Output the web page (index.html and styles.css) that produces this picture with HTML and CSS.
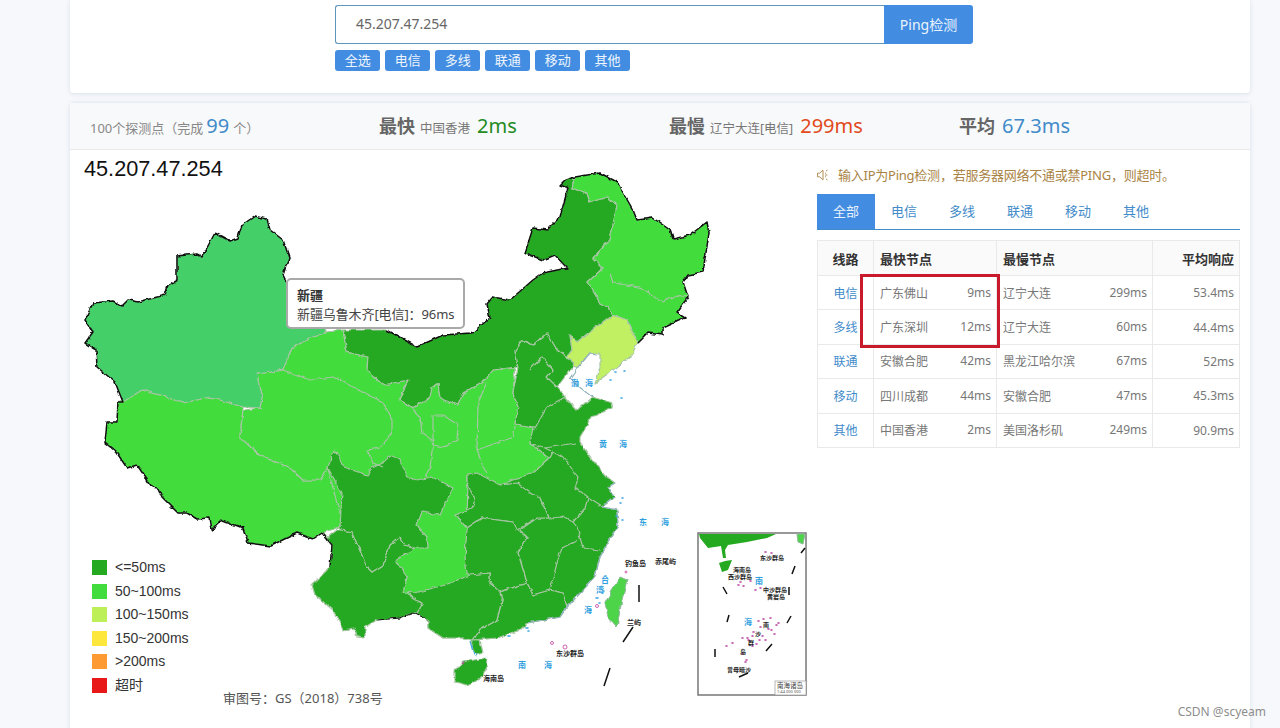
FILE: index.html
```html
<!DOCTYPE html>
<html lang="zh-CN">
<head>
<meta charset="utf-8">
<title>Ping检测</title>
<link rel="stylesheet" href="styles.css">
</head>
<body>
<section class="search-card">
  <div class="search-inner">
    <div class="search-row">
      <div class="search-input">45.207.47.254</div>
      <div class="search-btn">Ping检测</div>
    </div>
    <div class="quick-row">
      <span class="quick">全选</span><span class="quick">电信</span><span class="quick">多线</span><span class="quick">联通</span><span class="quick">移动</span><span class="quick">其他</span>
    </div>
  </div>
</section>

<section class="result-card">
  <header class="summary">
    <div class="sum-item sum-count">100个探测点（完成<b class="num-blue">99</b>个）</div>
    <div class="sum-item"><b class="sum-label">最快</b><span class="sum-place">中国香港</span><span class="sum-val green">2ms</span></div>
    <div class="sum-item"><b class="sum-label">最慢</b><span class="sum-place">辽宁大连[电信]</span><span class="sum-val red">299ms</span></div>
    <div class="sum-item"><b class="sum-label">平均</b><span class="sum-val blue">67.3ms</span></div>
  </header>

  <div class="result-body">
    <div class="map-area">
      <svg class="map-svg" viewBox="70 150 740 578" width="740" height="578" aria-hidden="true">
        <defs>
          <filter id="rough" filterUnits="userSpaceOnUse" x="70" y="150" width="740" height="578">
            <feTurbulence type="fractalNoise" baseFrequency="0.14" numOctaves="3" seed="4" result="n"/>
            <feDisplacementMap in="SourceGraphic" in2="n" scale="4" xChannelSelector="R" yChannelSelector="G"/>
          </filter>
        </defs>
        <g filter="url(#rough)">
        <!-- Tibet -->
        <polygon class="p mid" points="118,402 142,390 160,395 183,403 210,397 243,407 243,410 240,437 257,453 290,468 303,480 320,480 328,468 342,493 340,527 322,533 313,539 297,533 270,546 248,543 243,528 222,520 212,530 210,518 197,519 187,513 178,513 162,497 158,488 152,487 137,465 127,468 115,450 105,442 107,422 117,422"/>
        <!-- central: Qinghai, Gansu, Ningxia, Shaanxi, Shanxi, Henan, Chongqing, Guizhou -->
        <polygon class="p mid" points="258,374 283,370 292,348 310,338 327,332 343,330 347,352 368,357 367,370 383,385 408,380 400,400 412,408 430,398 432,387 438,383 440,398 458,405 463,393 485,380 493,370 515,368 513,393 518,407 515,425 535,428 530,443 550,458 533,473 545,495 560,530 480,610 410,610 345,535 328,468 320,480 303,480 290,468 257,453 240,437 243,410 260,408 262,397"/>
        <!-- Xinjiang -->
        <polygon class="p xj" points="85,320 93,303 113,301 122,306 128,300 138,302 165,295 168,285 177,280 177,256 197,254 202,257 215,233 230,241 238,238 242,225 255,216 267,219 270,230 283,240 289,257 283,275 287,283 300,300 327,332 310,338 292,348 283,370 258,374 262,397 260,408 243,407 210,397 183,403 160,395 142,390 123,402 115,382 97,367 96,350 85,343 93,332"/>
        <!-- Inner Mongolia -->
        <polygon class="p dark" points="343,330 387,330 417,347 443,335 472,333 490,318 487,303 492,297 510,300 533,280 543,273 567,268 555,255 543,260 525,253 533,228 547,230 560,217 568,188 560,185 565,180 575,177 572,188 587,193 590,202 608,197 617,205 610,240 593,258 603,268 588,282 600,303 608,307 612,315 577,342 570,335 572,350 567,357 557,350 547,333 533,345 522,340 515,350 518,367 493,370 485,380 463,393 458,405 440,398 438,383 432,387 430,398 412,408 400,400 408,380 383,385 367,370 368,357 347,352"/>
        <!-- Northeast -->
        <polygon class="p mid" points="575,177 600,173 617,182 633,210 637,220 653,218 670,230 673,239 690,235 707,222 709,233 703,272 688,275 683,282 688,297 677,312 685,317 663,327 663,335 648,333 638,343 627,320 612,315 608,307 600,303 588,282 603,268 593,258 610,240 617,205 608,197 590,202 587,193 572,188"/>
        <polyline class="line" points="610,273 613,283 640,287 663,302 677,295 687,297"/>
        <!-- Liaoning -->
        <polygon class="p ln" points="612,315 627,320 638,343 630,357 613,370 595,383 600,368 600,353 590,353 577,368 567,357 572,350 570,335 577,342"/>
        <!-- East and south base -->
        <polygon class="p dark" points="533,428 547,407 560,398 565,397 577,410 592,397 613,403 612,408 592,417 580,437 580,443 595,463 607,477 615,483 608,487 615,497 602,507 617,510 618,527 610,540 600,557 595,577 583,590 567,607 560,617 527,623 520,630 497,638 473,640 463,638 443,638 428,628 428,620 470,575 467,528 468,475 500,485 533,473 550,458 530,443"/>
        <!-- Hebei -->
        <polygon class="p dark" points="515,350 522,340 533,345 547,333 557,350 567,357 575,363 568,373 557,387 565,397 547,407 535,428 515,425 518,407 513,393 518,367"/>
        <polyline class="line" points="530,370 542,357 553,370 547,377 557,387"/>
        <!-- Shandong -->
        <polyline class="line" points="530,443 545,448 576,443"/>
        <!-- Jiangsu / Anhui -->
        <polyline class="line" points="545,448 553,452 563,457 578,477 575,488 588,498 602,507"/>
        <polyline class="line" points="550,458 553,452"/>
        <polyline class="line" points="588,498 585,508 573,522 563,517 548,518 540,498"/>
        <!-- Zhejiang -->
        <polyline class="line" points="573,522 577,527 583,548 600,550"/>
        <!-- Fujian -->
        <polyline class="line" points="578,540 562,548 557,563 550,590 563,593 567,607"/>
        <!-- Jiangxi -->
        <polyline class="line" points="548,518 537,518 520,530 527,537 518,553 527,583 533,595 550,590"/>
        <!-- Hubei -->
        <polygon class="p dark" points="468,475 477,473 500,485 517,483 533,495 540,498 548,518 537,518 517,530 513,522 482,518 467,528 455,515 472,508 475,500 468,485"/>
        <!-- Hunan / Guangdong -->
        <polygon class="p dark" points="467,528 482,518 513,522 517,530 527,537 518,553 527,583 500,592 490,583 490,573 470,575 467,573 465,557"/>
        <polygon class="p dark" points="500,592 527,583 533,595 550,590 563,593 567,607 560,617 527,623 520,630 497,638 473,640 480,630 497,620 502,600"/>
        <polygon class="p dark" points="471,640 480,640 483,653 476,655 473,650"/>
        <!-- Guangxi -->
        <polygon class="p dark" points="407,592 415,593 445,585 470,575 490,573 490,583 500,592 502,600 497,620 480,630 473,640 463,638 443,638 428,628 428,620 413,613 417,613 423,603 415,600"/>
        <!-- Yunnan -->
        <polygon class="p dark" points="328,537 337,530 342,530 352,532 367,567 372,572 383,565 390,545 400,537 405,545 415,548 395,560 407,577 403,592 415,600 423,603 417,613 413,613 400,618 377,620 365,627 365,638 357,637 355,628 343,630 333,610 315,595 312,585 330,567 332,545 322,533"/>
        <!-- Sichuan -->
        <polygon class="p dark" points="333,450 338,455 343,467 367,475 372,468 385,462 390,455 400,460 407,477 417,480 432,477 453,488 440,515 422,512 417,525 427,537 428,548 415,548 405,545 400,537 390,545 383,565 372,572 367,567 352,532 342,530 340,527 342,493 328,468"/>
        <!-- interior lines -->
        <polyline class="line" points="283,370 310,380 333,377 363,392 383,402 392,420 392,433 380,448 367,450 373,463 383,467"/>
        <polyline class="line" points="400,400 412,408 420,417 422,433 432,440 433,445 430,467 425,477"/>
        <polyline class="line" points="433,445 433,415 443,415 458,425 457,440 445,447 433,445"/>
        <polyline class="line" points="487,382 478,403 477,450 483,467 487,473"/>
        <polyline class="line" points="477,450 513,437 515,427"/>
        <!-- Hainan, Taiwan -->
        <polygon class="p dark" points="455,670 463,662 485,658 488,665 482,677 467,685 455,682"/>
        <polygon class="p tw" points="620,577 627,580 622,600 617,627 608,617 605,603 612,590"/>
        <!-- black border -->
        <polyline class="border" points="118,402 123,402 115,382 97,367 96,350 85,343 93,332 85,320 93,303 113,301 122,306 128,300 138,302 165,295 168,285 177,280 177,256 197,254 202,257 215,233 230,241 238,238 242,225 255,216 267,219 270,230 283,240 289,257 283,275 287,283"/>
        <polyline class="border" points="387,330 417,347 443,335 472,333 490,318 487,303 492,297 510,300 533,280 543,273 567,268 555,255 543,260 525,253 533,228 547,230 560,217 568,188 560,185 565,180 575,177 600,173 617,182 633,210 637,220 653,218 670,230 673,239 690,235 707,222 709,233 703,272 688,275 683,282 688,297 677,312 685,317 663,327 663,335 648,333 638,343"/>
        <polyline class="border" points="118,402 117,422 107,422 105,442 115,450 127,468 137,465 152,487 158,488 162,497 178,513 187,513 197,519 210,518 212,530 222,520 243,528 248,543 270,546 297,533 313,539 322,533 332,545 330,567"/>
        <polyline class="border thin" points="377,620 400,618 413,613 428,620"/>
        <!-- coast tint -->
        <polyline class="coast" points="596,354 590,353 577,368 570,378 577,385 592,397"/>
        <polyline class="coast" points="615,483 608,487 615,497 602,507 617,510 618,527 610,540 600,557 595,577 583,590 567,607 560,617 527,623"/>
        <polyline class="coast blue-coast" points="470,641 473,652 477,656"/>
        </g>
        <path class="bluedots" d="M622 498h1M620 503h1M616 516h1M622 520h1M605 576h1M603 591h1M596 598h2M599 603h1M590 610h1M526 628h2M528 631h1M508 636h2M621 398h1M615 372h1M610 380h1M624 371h1"/>
        <!-- water labels -->
        <text class="sea" x="571" y="386">渤</text><text class="sea" x="585" y="386">海</text>
        <text class="sea" x="599" y="447">黄</text><text class="sea" x="619" y="447">海</text>
        <text class="sea" x="639" y="525">东</text><text class="sea" x="661" y="525">海</text>
        <text class="sea" x="518" y="668">南</text><text class="sea" x="544" y="668">海</text>
        <text class="sea" x="601" y="583">台</text><text class="sea" x="596" y="593">湾</text><text class="sea" x="584" y="613">海</text>
        <text class="isle" x="625" y="566">钓鱼岛</text><text class="isle" x="655" y="564">赤尾屿</text>
        <text class="isle" x="627" y="625">兰屿</text>
        <text class="isle" x="556" y="656">东沙群岛</text><text class="isle" x="483" y="681">海南岛</text>
        <circle class="reef" cx="552" cy="643" r="1.5"/><circle class="reef" cx="565" cy="647" r="2"/><circle class="reef" cx="626" cy="572" r="1"/><circle class="reef" cx="463" cy="663" r="1"/><circle class="reef" cx="597" cy="606" r="1.5"/>
        <!-- dashes -->
        <path class="dash" d="M639 585L639 602M633 627L623 642M610 668L604 686"/>
        <!-- inset -->
        <rect class="inset" x="698" y="533" width="108" height="162"/>
        <path class="dark" d="M699 534H776L767 538 747 542 728 545 725 550 726 558 723 558 721 546 708 548 700 538Z"/>
        <polygon class="dark" points="719,563 725,561 732,560 728,570 722,572"/>
        <polygon class="tw" points="797,534 805,534 803,544 798,542"/>
        <path class="dash" d="M805 548L801 553M795 566L792 574M789 587V595M723 587L727 594M729 615L727 622M791 616L787 623M715 649V657M772 644L766 651M739 677L748 673"/>
        <path class="reefs" d="M765 552h1M771 553h1M740 582h1M738 585h1M743 586h1M750 581h1M755 590h1M760 588h1M758 621h1M763 619h1M770 618h1M778 623h1M753 632h1M760 627h1M768 629h1M774 634h1M776 625h1M747 638h1M752 636h1M748 640h1M742 638h1M759 640h1M765 640h1M771 630h1M726 646h1M732 643h1M742 654h1M746 660h1M752 646h1M745 662h1M756 644h1M762 636h1"/>
        <text class="isle small" x="760" y="560">东沙群岛</text>
        <text class="isle small" x="733" y="572">海南岛</text>
        <text class="isle small" x="728" y="579">西沙群岛</text>
        <text class="isle small" x="763" y="592">中沙群岛</text>
        <text class="isle small" x="767" y="599">黄岩岛</text>
        <text class="isle small" x="727" y="672">曾母暗沙</text>
        <text class="isle small" x="763" y="627">南</text><text class="isle small" x="755" y="636">沙</text><text class="isle small" x="748" y="645">群</text><text class="isle small" x="740" y="654">岛</text>
        <text class="sea" x="755" y="584">南</text><text class="sea" x="744" y="625">海</text>
        <rect class="scale-box" x="775" y="681" width="31" height="14"/>
        <text class="scale-a" x="777" y="688">南海诸岛</text>
        <text class="scale-b" x="777" y="693">1:44 000 000</text>
      </svg>

      <h2 class="map-title">45.207.47.254</h2>

      <ul class="legend">
        <li class="legend-item"><i class="swatch s1"></i>&lt;=50ms</li>
        <li class="legend-item"><i class="swatch s2"></i>50~100ms</li>
        <li class="legend-item"><i class="swatch s3"></i>100~150ms</li>
        <li class="legend-item"><i class="swatch s4"></i>150~200ms</li>
        <li class="legend-item"><i class="swatch s5"></i>&gt;200ms</li>
        <li class="legend-item"><i class="swatch s6"></i>超时</li>
      </ul>
      <div class="approval">审图号：GS（2018）738号</div>

      <div class="tooltip">
        <strong class="tip-title">新疆</strong>
        <div class="tip-text">新疆乌鲁木齐[电信]：96ms</div>
      </div>
    </div>

    <aside class="side">
      <p class="notice">
        <svg class="notice-icon" viewBox="0 0 12 12" width="12" height="12" aria-hidden="true"><path d="M.5 4.2H2.6L6 1.2V10.8L2.6 7.8H.5Z M8 3.8L9 4.6 M8 6H10.4 M8 8.2L9 7.4 M9 2L10.5 1 M9 10L10.5 11" fill="none" stroke="currentColor" stroke-width=".9"/></svg>
        <span>输入IP为Ping检测，若服务器网络不通或禁PING，则超时。</span>
      </p>
      <nav class="tabs">
        <span class="tab active">全部</span><span class="tab">电信</span><span class="tab">多线</span><span class="tab">联通</span><span class="tab">移动</span><span class="tab">其他</span>
      </nav>
      <div class="table-wrap">
        <table class="stats">
          <thead>
            <tr><th class="c-line">线路</th><th>最快节点</th><th>最慢节点</th><th class="c-avg">平均响应</th></tr>
          </thead>
          <tbody>
            <tr><td class="c-line link">电信</td><td><div class="pair"><span>广东佛山</span><span>9ms</span></div></td><td><div class="pair"><span>辽宁大连</span><span>299ms</span></div></td><td class="c-avg">53.4ms</td></tr>
            <tr><td class="c-line link">多线</td><td><div class="pair"><span>广东深圳</span><span>12ms</span></div></td><td><div class="pair"><span>辽宁大连</span><span>60ms</span></div></td><td class="c-avg">44.4ms</td></tr>
            <tr><td class="c-line link">联通</td><td><div class="pair"><span>安徽合肥</span><span>42ms</span></div></td><td><div class="pair"><span>黑龙江哈尔滨</span><span>67ms</span></div></td><td class="c-avg">52ms</td></tr>
            <tr><td class="c-line link">移动</td><td><div class="pair"><span>四川成都</span><span>44ms</span></div></td><td><div class="pair"><span>安徽合肥</span><span>47ms</span></div></td><td class="c-avg">45.3ms</td></tr>
            <tr><td class="c-line link">其他</td><td><div class="pair"><span>中国香港</span><span>2ms</span></div></td><td><div class="pair"><span>美国洛杉矶</span><span>249ms</span></div></td><td class="c-avg">90.9ms</td></tr>
          </tbody>
        </table>
        <div class="highlight"></div>
      </div>
    </aside>
  </div>
</section>
<div class="watermark">CSDN @scyeam</div>
</body>
</html>
```
FILE: styles.css
```css
* { box-sizing: border-box; }
html, body { margin: 0; height: 728px; overflow: hidden; }
body {
  background: #f7f8fb;
  font-family: "Noto Sans", "Noto Sans CJK SC", sans-serif;
  font-size: 13px;
  color: #666;
  padding: 0 30px 0 70px;
  position: relative;
}
.search-card {
  height: 93px;
  background: #fff;
  border-radius: 0 0 4px 4px;
  box-shadow: 0 1px 5px rgba(90, 130, 170, .18);
  padding: 5px 0 0 265px;
}
.search-inner { width: 638px; }
.search-row { display: flex; height: 39px; }
.search-input {
  flex: 1;
  border: 1px solid #5f94bb;
  border-right: 0;
  border-radius: 3px 0 0 3px;
  padding-left: 20px;
  font-size: 14px;
  line-height: 36px;
  color: #666;
}
.search-btn {
  width: 89px;
  background: #428de2;
  color: #eaf3fd;
  border-radius: 0 3px 3px 0;
  font-size: 14px;
  line-height: 39px;
  text-align: center;
}
.quick-row { display: flex; gap: 4.6px; margin-top: 6px; }
.quick {
  width: 45.4px;
  height: 21px;
  background: #428de2;
  color: #eef5fd;
  border-radius: 3px;
  font-size: 13px;
  line-height: 20px;
  text-align: center;
}
.result-card {
  margin-top: 10px;
  height: 640px;
  background: #fff;
  box-shadow: 0 0 5px rgba(90, 130, 170, .2);
  border-radius: 4px 4px 0 0;
}
.summary {
  height: 47px;
  background: #f8f9fa;
  border-bottom: 1px solid #e8eaec;
  padding: 0 0 2px 19px;
  display: grid;
  grid-template-columns: repeat(4, 290px);
  align-items: center;
}
.sum-item { display: flex; align-items: baseline; white-space: nowrap; }
.sum-count { display: block; color: #888; font-size: 13px; margin-left: 1px; }
.sum-count b { font-weight: 400; font-size: 20px; margin: 0 4px 0 3px; }
.num-blue, .blue { color: #428bca; }
.sum-label { font-size: 18px; color: #666; margin-right: 5px; }
.sum-place { font-size: 12.5px; color: #777; margin-right: 7px; }
.sum-val { font-size: 20px; }
.green { color: #228b22; }
.red { color: #e2491c; }
.blue { margin-left: 2px; }
.result-body { display: flex; height: 592px; }
.map-area { position: relative; width: 747px; flex: none; }
.map-svg { position: absolute; left: 0; top: 0; }
.map-title {
  position: absolute;
  margin: 0;
  left: 14px;
  top: 5px;
  font: 400 21.7px/28px "Liberation Sans", sans-serif;
  color: #111;
}
.p { stroke: #a7c6a4; stroke-width: 1.2; stroke-linejoin: round; }
.dark { fill: #25a920; }
.mid { fill: #42dc3e; }
.xj { fill: #45cf68; }
.ln { fill: #c2f064; }
.tw { fill: #4dd44a; stroke: #8fb79a; stroke-width: 1; }
.line { fill: none; stroke: #a7c6a4; stroke-width: 1.2; stroke-linejoin: round; }
.border { fill: none; stroke: #111; stroke-width: 1.5; stroke-linejoin: round; }
.border.thin { stroke-width: 1; }
.coast { fill: none; stroke: #93b4bd; stroke-width: 1.2; }
.blue-coast { stroke: #4aa7d8; }
.bluedots { fill: none; stroke: #3aa3e0; stroke-width: 1.6; stroke-linecap: round; }
.sea { fill: #2f9fe0; font-size: 8px; font-weight: 700; }
.isle { fill: #222; font-size: 7px; font-weight: 700; }
.isle.small { font-size: 6px; }
.reef { fill: none; stroke: #c040a0; stroke-width: .8; }
.reefs { fill: none; stroke: #b83f9f; stroke-width: 1.6; stroke-linecap: round; }
.dash { fill: none; stroke: #111; stroke-width: 1.5; }
.inset { fill: #fff; stroke: #777; stroke-width: 1.5; }
.scale-box { fill: #fff; stroke: #999; stroke-width: .7; }
.scale-a { fill: #444; font-size: 6.5px; }
.scale-b { fill: #555; font-size: 4px; }
.legend {
  position: absolute;
  left: 22px;
  top: 410px;
  margin: 0;
  padding: 0;
  list-style: none;
  display: flex;
  flex-direction: column;
  gap: 8.6px;
}
.legend-item {
  display: flex;
  align-items: center;
  gap: 8px;
  height: 15px;
  font: 14px/15px "Liberation Sans", "Noto Sans CJK SC", sans-serif;
  color: #333;
}
.swatch { width: 15px; height: 15px; display: block; }
.s1 { background: #25a920; }
.s2 { background: #42dc3e; }
.s3 { background: #bcef58; }
.s4 { background: #fde73c; }
.s5 { background: #fd9a32; }
.s6 { background: #e81818; }
.approval {
  position: absolute;
  left: 153px;
  top: 539px;
  font-size: 13px;
  line-height: 18px;
  color: #555;
  white-space: nowrap;
}
.tooltip {
  position: absolute;
  left: 216px;
  top: 128px;
  width: 179px;
  height: 51px;
  background: #fff;
  border: 2px solid #a9a9a9;
  border-radius: 5px;
  padding: 6px 9px;
  font-size: 13px;
  line-height: 19px;
  color: #444;
  white-space: nowrap;
}
.tip-title { color: #333; font-size: 13px; display: block; }
.tip-text { font-size: 13px; letter-spacing: -.1px; }
.side { flex: none; width: 423px; padding-top: 16px; }
.notice {
  margin: 0;
  height: 18px;
  display: flex;
  align-items: center;
  gap: 9px;
  color: #a98344;
  font-size: 13px;
  line-height: 18px;
  letter-spacing: -.24px;
  white-space: nowrap;
}
.notice-icon { flex: none; }
.tabs {
  display: flex;
  margin-top: 10px;
  height: 36px;
  border-bottom: 1px solid #428bca;
}
.tab {
  width: 58px;
  line-height: 34px;
  text-align: center;
  color: #428bca;
  font-size: 13px;
}
.tab.active { background: #428de2; color: #e8f2fd; }
.table-wrap { position: relative; margin-top: 10px; }
.stats {
  width: 423px;
  table-layout: fixed;
  border-collapse: collapse;
  font-size: 12px;
  color: #777;
}
.stats th:nth-child(1) { width: 56px; }
.stats th:nth-child(2) { width: 123px; }
.stats th:nth-child(3) { width: 156px; }
.stats th, .stats td { border: 1px solid #e9e9e9; padding: 0 5px 0 6px; height: 34.4px; }
.stats th { text-align: left; height: 35px; background: #fafafa; color: #333; font-size: 13px; font-weight: 700; }
.stats .c-line { text-align: center; padding: 0; }
.stats .c-avg { text-align: right; }
.link { color: #428bca; }
.pair { display: flex; justify-content: space-between; white-space: nowrap; }
.highlight {
  position: absolute;
  left: 43px;
  top: 34px;
  width: 140px;
  height: 74px;
  border: 3px solid #c9192c;
}
.watermark {
  position: absolute;
  right: 14px;
  top: 704px;
  font-size: 12px;
  line-height: 16px;
  color: #8d8d8d;
}
```
